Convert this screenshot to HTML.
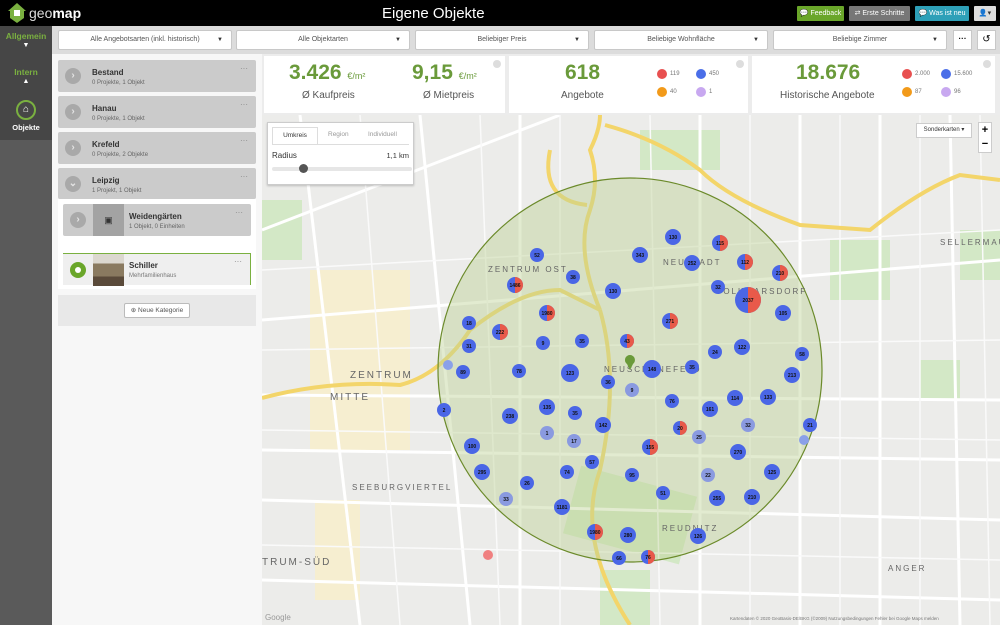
<!DOCTYPE html>
<html><head><meta charset="utf-8"><style>
*{box-sizing:border-box;margin:0;padding:0}
body{width:1000px;height:625px;overflow:hidden;font-family:"Liberation Sans",sans-serif;background:#fff;position:relative}
.abs{position:absolute}
#hdr{left:0;top:0;width:1000px;height:26px;background:#000}
.btn{position:absolute;top:6px;height:15px;font-size:7px;color:#fff;line-height:15px;text-align:center;border-radius:1px}
#side{left:0;top:26px;width:52px;height:599px;background:#5a5a5a}
#fbar{left:52px;top:26px;width:948px;height:28px;background:#dcdcdc}
.dd{position:absolute;top:30px;height:20px;background:#fff;border:1px solid #c8c8c8;font-size:7px;color:#555;line-height:18px;text-align:center;border-radius:2px}
.dd:after{content:"▼";position:absolute;right:8px;top:0;font-size:6px;color:#333}
#lp{left:52px;top:54px;width:210px;height:571px;background:#f7f7f7}
.it{position:absolute;background:#cbcbcb;border-radius:2px}
.it .c{position:absolute;left:7px;top:8px;width:16px;height:16px;border-radius:50%;background:#a9a9a9;color:#e4e4e4;font-size:10px;text-align:center;line-height:16px;font-weight:bold}
.it b{position:absolute;left:34px;top:8px;font-size:8px;color:#333}
.it i{position:absolute;left:34px;top:20px;font-size:6px;color:#666;font-style:normal}
.it u{position:absolute;right:8px;top:4px;font-size:8px;color:#888;text-decoration:none}
.panel{position:absolute;top:56px;height:57px;background:#fff}
.big{position:absolute;font-size:21px;font-weight:bold;color:#6a9a3a}
.big small{font-size:9px;font-weight:normal}
.lbl{position:absolute;font-size:10px;color:#555}
.dot{position:absolute;width:10px;height:10px;border-radius:50%}
.dt{position:absolute;font-size:6px;color:#777}
.q{position:absolute;width:8px;height:8px;border-radius:50%;background:#ddd;top:4px}
#map{left:262px;top:115px;width:738px;height:510px;background:#ececea;overflow:hidden}
</style></head><body>
<div id="hdr" class="abs">
 <svg class="abs" style="left:7px;top:2px" width="20" height="22" viewBox="0 0 20 22"><path d="M10 1 L19 9 L17 9 L17 16 L10 21 L3 16 L3 9 L1 9Z" fill="#7ab040"/><rect x="7" y="8" width="6" height="6" fill="#fff"/></svg>
 <div class="abs" style="left:29px;top:5px;font-size:14px;color:#ddd">geo<b style="color:#fff">map</b></div>
 <div class="abs" style="left:382px;top:5px;font-size:15px;color:#fff">Eigene Objekte</div>
 <div class="btn" style="left:797px;width:47px;background:#6aa62a">💬 Feedback</div>
 <div class="btn" style="left:849px;width:61px;background:#777">⇄ Erste Schritte</div>
 <div class="btn" style="left:915px;width:54px;background:#2ea0b8">💬 Was ist neu</div>
 <div class="btn" style="left:974px;width:22px;background:#ddd;color:#333">👤▾</div>
</div>
<div id="side" class="abs">
 <div class="abs" style="left:0;top:0;width:52px;height:114px;background:#464646"></div>
 <div class="abs" style="left:0;top:5px;width:52px;text-align:center;font-size:8.5px;font-weight:bold;color:#7ab040">Allgemein</div>
 <div class="abs" style="left:0;top:16px;width:52px;text-align:center;font-size:7px;color:#fff">▼</div>
 <div class="abs" style="left:0;top:41px;width:52px;text-align:center;font-size:8.5px;font-weight:bold;color:#7ab040">Intern</div>
 <div class="abs" style="left:0;top:52px;width:52px;text-align:center;font-size:7px;color:#fff">▲</div>
 <div class="abs" style="left:16px;top:74px;width:20px;height:20px;border-radius:50%;border:2px solid #7ab040;text-align:center;font-size:10px;line-height:16px;color:#fff">⌂</div>
 <div class="abs" style="left:0;top:97px;width:52px;text-align:center;font-size:7.5px;font-weight:bold;color:#fff">Objekte</div>
</div>
<div id="fbar" class="abs"></div>
<div class="dd" style="left:58px;width:174px">Alle Angebotsarten (inkl. historisch)</div>
<div class="dd" style="left:236px;width:174px">Alle Objektarten</div>
<div class="dd" style="left:415px;width:174px">Beliebiger Preis</div>
<div class="dd" style="left:594px;width:174px">Beliebige Wohnfläche</div>
<div class="dd" style="left:773px;width:174px">Beliebige Zimmer</div>
<div class="abs" style="left:953px;top:30px;width:19px;height:20px;background:#fff;border:1px solid #c8c8c8;font-size:8px;text-align:center;line-height:16px;font-weight:bold">···</div>
<div class="abs" style="left:977px;top:30px;width:19px;height:20px;background:#fff;border:1px solid #c8c8c8;font-size:10px;text-align:center;line-height:18px">↺</div>
<div id="lp" class="abs"></div>
<div class="it" style="left:58px;top:60px;width:198px;height:32px"><div class="c">›</div><b>Bestand</b><i>0 Projekte, 1 Objekt</i><u>···</u></div>
<div class="it" style="left:58px;top:96px;width:198px;height:32px"><div class="c">›</div><b>Hanau</b><i>0 Projekte, 1 Objekt</i><u>···</u></div>
<div class="it" style="left:58px;top:132px;width:198px;height:32px"><div class="c">›</div><b>Krefeld</b><i>0 Projekte, 2 Objekte</i><u>···</u></div>
<div class="it" style="left:58px;top:168px;width:198px;height:31px"><div class="c">⌄</div><b>Leipzig</b><i>1 Projekt, 1 Objekt</i><u>···</u></div>
<div class="abs" style="left:58px;top:199px;width:198px;height:90px;background:#fff"></div>
<div class="it" style="left:63px;top:204px;width:188px;height:32px"><div class="c">›</div><div class="abs" style="left:30px;top:0;width:31px;height:32px;background:#a3a3a3;color:#333;font-size:9px;text-align:center;line-height:32px">▣</div><b style="left:66px">Weidengärten</b><i style="left:66px">1 Objekt, 0 Einheiten</i><u>···</u></div>
<div class="abs" style="left:63px;top:253px;width:188px;height:32px;background:#efefef;border-top:1px solid #7ab040;border-right:1px solid #7ab040">
 <div class="abs" style="left:7px;top:8px;width:16px;height:16px;border-radius:50%;background:#6aa62a"><div class="abs" style="left:5px;top:5px;width:6px;height:6px;border-radius:50%;background:#fff"></div></div>
 <div class="abs" style="left:30px;top:0;width:31px;height:32px;background:linear-gradient(#dcd8d0 0 30%,#8a7a60 30% 70%,#5a4a3a 70%)"></div>
 <b class="abs" style="left:66px;top:7px;font-size:8px;color:#333">Schiller</b><i class="abs" style="left:66px;top:19px;font-size:6px;color:#777;font-style:normal">Mehrfamilienhaus</i><u class="abs" style="right:8px;top:3px;font-size:8px;color:#888;text-decoration:none">···</u>
</div>
<div class="abs" style="left:58px;top:295px;width:198px;height:31px;background:#e8e8e8"></div>
<div class="abs" style="left:124px;top:303px;width:66px;height:15px;background:#fff;border:1px solid #bbb;font-size:6.5px;color:#555;text-align:center;line-height:13px;border-radius:2px">⊕ Neue Kategorie</div>
<div class="abs" style="left:262px;top:54px;width:738px;height:61px;background:#ececec"></div>
<div class="panel" style="left:264px;width:241px"><div class="big" style="left:25px;top:5px">3.426 <small>€/m²</small></div><div class="lbl" style="left:38px;top:34px">Ø Kaufpreis</div><div class="big" style="left:148px;top:5px">9,15 <small>€/m²</small></div><div class="lbl" style="left:159px;top:34px">Ø Mietpreis</div><div class="q" style="right:4px"></div></div>
<div class="panel" style="left:509px;width:239px"><div class="big" style="left:56px;top:5px">618</div><div class="lbl" style="left:52px;top:34px">Angebote</div>
 <div class="dot" style="left:148px;top:13px;background:#e85050"></div><div class="dt" style="left:161px;top:15px">119</div>
 <div class="dot" style="left:187px;top:13px;background:#4a6ee8"></div><div class="dt" style="left:200px;top:15px">450</div>
 <div class="dot" style="left:148px;top:31px;background:#f29a1a"></div><div class="dt" style="left:161px;top:33px">40</div>
 <div class="dot" style="left:187px;top:31px;background:#c8a8f0"></div><div class="dt" style="left:200px;top:33px">1</div><div class="q" style="right:4px"></div></div>
<div class="panel" style="left:752px;width:243px"><div class="big" style="left:44px;top:5px">18.676</div><div class="lbl" style="left:28px;top:34px">Historische Angebote</div>
 <div class="dot" style="left:150px;top:13px;background:#e85050"></div><div class="dt" style="left:163px;top:15px">2.000</div>
 <div class="dot" style="left:189px;top:13px;background:#4a6ee8"></div><div class="dt" style="left:202px;top:15px">15.600</div>
 <div class="dot" style="left:150px;top:31px;background:#f29a1a"></div><div class="dt" style="left:163px;top:33px">87</div>
 <div class="dot" style="left:189px;top:31px;background:#c8a8f0"></div><div class="dt" style="left:202px;top:33px">96</div><div class="q" style="right:4px"></div></div>
<div id="map" class="abs">
<svg width="738" height="510" viewBox="262 115 738 510" style="position:absolute;left:0;top:0">
 <rect x="262" y="115" width="738" height="510" fill="#ececea"/>
 <g fill="#d3e8c6"><rect x="640" y="130" width="80" height="40"/><rect x="830" y="240" width="60" height="60"/><rect x="262" y="200" width="40" height="60"/><rect x="570" y="480" width="120" height="70" transform="rotate(15 630 515)"/><rect x="600" y="570" width="50" height="55"/><rect x="920" y="360" width="40" height="40"/><rect x="960" y="230" width="40" height="50"/><rect x="350" y="300" width="20" height="60"/></g>
 <g fill="#f6eed0"><rect x="310" y="270" width="100" height="180"/><rect x="315" y="500" width="45" height="100"/></g>
 <g stroke="#fff" stroke-width="3" fill="none">
  <path d="M262 395 L1000 400"/><path d="M262 500 L1000 520"/><path d="M300 115 L360 625"/><path d="M420 115 L470 625"/><path d="M262 320 L1000 260"/><path d="M700 115 L700 625"/><path d="M880 115 L880 625"/><path d="M262 580 L1000 600"/><path d="M262 230 L560 115"/><path d="M800 115 L800 625"/><path d="M950 115 L960 625"/><path d="M520 115 L520 625"/><path d="M262 450 L1000 460"/>
 </g>
 <g stroke="#fafafa" stroke-width="1.5" fill="none">
  <path d="M262 270 L1000 230"/><path d="M262 350 L1000 340"/><path d="M262 430 L1000 440"/><path d="M262 545 L1000 560"/><path d="M360 115 L400 625"/><path d="M480 115 L500 625"/><path d="M560 115 L560 625"/><path d="M650 115 L660 625"/><path d="M750 115 L750 625"/><path d="M840 115 L840 625"/><path d="M920 115 L920 625"/><path d="M980 115 L990 625"/>
 </g>
 <g stroke="#f3d56a" stroke-width="4" fill="none">
  <path d="M262 398 Q330 380 400 385 Q440 375 470 330 Q520 290 560 290 L600 310"/>
  <path d="M600 310 Q575 250 590 210 Q600 180 590 150 Q600 130 600 115"/>
  <path d="M587 205 Q540 200 550 150"/>
  <path d="M600 310 Q620 380 600 470 Q575 540 630 625"/>
  <path d="M605 125 Q660 140 700 170 Q730 200 800 225 L870 230 Q920 190 960 175 L1000 180"/>
 </g>
 <circle cx="630" cy="370" r="192" fill="rgba(190,210,150,0.45)" stroke="#6b8a2a" stroke-width="1.2"/>
 <g font-family="Liberation Sans" font-size="8" fill="#666" letter-spacing="2">
  <text x="488" y="272">ZENTRUM OST</text><text x="663" y="265">NEUSTADT</text><text x="716" y="294">VOLKMARSDORF</text><text x="604" y="372">NEUSCHÖNEFELD</text><text x="662" y="531">REUDNITZ</text><text x="352" y="490">SEEBURGVIERTEL</text><text x="350" y="378" font-size="10">ZENTRUM</text><text x="330" y="400" font-size="10">MITTE</text><text x="262" y="565" font-size="10">TRUM-SÜD</text><text x="888" y="571">ANGER</text><text x="940" y="245">SELLERMAUSE</text>
 </g>
 <path d="M630 355 a5 5 0 1 1 -0.1 0Z M630 370 L625 360 L635 360Z" fill="#6a9a3a"/>
 <circle cx="448" cy="365" r="5" fill="#8aa0e8"/><circle cx="804" cy="440" r="5" fill="#8aa0e8"/>
 <circle cx="488" cy="555" r="5" fill="#f08080"/>
 <text x="265" y="620" font-family="Liberation Sans" font-size="8" fill="#999">Google</text>
 <text x="730" y="620" font-family="Liberation Sans" font-size="4.5" fill="#777">Kartendaten © 2020 GeoBasis-DE/BKG (©2009)   Nutzungsbedingungen   Fehler bei Google Maps melden</text>
</svg>
<div class="abs" style="left:5px;top:7px;width:147px;height:63px;background:#fff;border:1px solid #ccc;box-shadow:0 1px 2px rgba(0,0,0,.2)">
 <div class="abs" style="left:4px;top:4px;width:46px;height:17px;border:1px solid #ddd;border-bottom:none;font-size:6.5px;text-align:center;line-height:16px;color:#333">Umkreis</div>
 <div class="abs" style="left:60px;top:8px;font-size:6.5px;color:#999">Region</div>
 <div class="abs" style="left:100px;top:8px;font-size:6.5px;color:#999">Individuell</div>
 <div class="abs" style="left:4px;top:21px;width:137px;height:1px;background:#ddd"></div>
 <div class="abs" style="left:4px;top:28px;font-size:8px;color:#333">Radius</div>
 <div class="abs" style="right:4px;top:28px;font-size:7.5px;color:#333">1,1 km</div>
 <div class="abs" style="left:4px;top:44px;width:140px;height:4px;background:#e6e6e6;border-radius:2px"></div>
 <div class="abs" style="left:31px;top:41px;width:9px;height:9px;background:#555;border-radius:50%"></div>
</div>
<div class="abs" style="left:654px;top:8px;width:56px;height:15px;background:#fff;border:1px solid #ccc;font-size:6px;text-align:center;line-height:13px;color:#333">Sonderkarten ▾</div>
<div class="abs" style="left:716px;top:7px;width:14px;height:31px;background:#fff;border:1px solid #ccc;font-size:11px;text-align:center;line-height:14px;font-weight:bold">+<br>−</div>
</div>
<svg class="abs" style="left:262px;top:115px" width="738" height="510" viewBox="262 115 738 510" font-family="Liberation Sans" font-size="5" font-weight="bold" text-anchor="middle">
<g fill="#4a66e6">
<circle cx="673" cy="237" r="8"/><circle cx="720" cy="243" r="8"/><circle cx="640" cy="255" r="8"/><circle cx="692" cy="263" r="8"/><circle cx="745" cy="262" r="8"/><circle cx="537" cy="255" r="7"/><circle cx="780" cy="273" r="8"/><circle cx="573" cy="277" r="7"/><circle cx="515" cy="285" r="8"/><circle cx="613" cy="291" r="8"/><circle cx="718" cy="287" r="7"/><circle cx="748" cy="300" r="13"/><circle cx="547" cy="313" r="8"/><circle cx="783" cy="313" r="8"/><circle cx="670" cy="321" r="8"/><circle cx="469" cy="323" r="7"/><circle cx="500" cy="332" r="8"/><circle cx="543" cy="343" r="7"/><circle cx="582" cy="341" r="7"/><circle cx="627" cy="341" r="7"/><circle cx="715" cy="352" r="7"/><circle cx="742" cy="347" r="8"/><circle cx="802" cy="354" r="7"/><circle cx="469" cy="346" r="7"/><circle cx="463" cy="372" r="7"/><circle cx="519" cy="371" r="7"/><circle cx="570" cy="373" r="9"/><circle cx="652" cy="369" r="9"/><circle cx="692" cy="367" r="7"/><circle cx="792" cy="375" r="8"/><circle cx="608" cy="382" r="7"/><circle cx="735" cy="398" r="8"/><circle cx="768" cy="397" r="8"/><circle cx="444" cy="410" r="7"/><circle cx="510" cy="416" r="8"/><circle cx="547" cy="407" r="8"/><circle cx="575" cy="413" r="7"/><circle cx="672" cy="401" r="7"/><circle cx="710" cy="409" r="8"/><circle cx="603" cy="425" r="8"/><circle cx="680" cy="428" r="7"/><circle cx="810" cy="425" r="7"/><circle cx="472" cy="446" r="8"/><circle cx="650" cy="447" r="8"/><circle cx="738" cy="452" r="8"/><circle cx="592" cy="462" r="7"/><circle cx="482" cy="472" r="8"/><circle cx="567" cy="472" r="7"/><circle cx="632" cy="475" r="7"/><circle cx="772" cy="472" r="8"/><circle cx="527" cy="483" r="7"/><circle cx="663" cy="493" r="7"/><circle cx="717" cy="498" r="8"/><circle cx="752" cy="497" r="8"/><circle cx="562" cy="507" r="8"/><circle cx="595" cy="532" r="8"/><circle cx="628" cy="535" r="8"/><circle cx="698" cy="536" r="8"/><circle cx="619" cy="558" r="7"/><circle cx="648" cy="557" r="7"/>
</g>
<g fill="#e85a4a">
<path d="M720 235 a8 8 0 0 1 0 16Z"/><path d="M745 254 a8 8 0 0 1 0 16Z"/><path d="M515 277 a8 8 0 0 1 0 16Z"/><path d="M748 287 a13 13 0 0 1 0 26Z"/><path d="M500 324 a8 8 0 0 1 0 16Z"/><path d="M670 313 a8 8 0 0 1 0 16Z"/><path d="M627 334 a7 7 0 0 1 0 14Z"/><path d="M680 421 a7 7 0 0 1 0 14Z"/><path d="M650 439 a8 8 0 0 1 0 16Z"/><path d="M595 524 a8 8 0 0 1 0 16Z"/><path d="M648 550 a7 7 0 0 1 0 14Z"/><path d="M547 305 a8 8 0 0 1 0 16Z"/><path d="M780 265 a8 8 0 0 1 0 16Z"/>
</g>
<g fill="#8a9ae0">
<circle cx="632" cy="390" r="7"/><circle cx="748" cy="425" r="7"/><circle cx="547" cy="433" r="7"/><circle cx="574" cy="441" r="7"/><circle cx="699" cy="437" r="7"/><circle cx="708" cy="475" r="7"/><circle cx="506" cy="499" r="7"/>
</g>
<g fill="#111">
<text x="673" y="239">130</text><text x="720" y="245">115</text><text x="640" y="257">343</text><text x="692" y="265">252</text><text x="745" y="264">112</text><text x="537" y="257">52</text><text x="780" y="275">210</text><text x="573" y="279">38</text><text x="515" y="287">1486</text><text x="613" y="293">130</text><text x="718" y="289">32</text><text x="748" y="302">2037</text><text x="547" y="315">1980</text><text x="783" y="315">105</text><text x="670" y="323">271</text><text x="469" y="325">18</text><text x="500" y="334">222</text><text x="543" y="345">9</text><text x="582" y="343">35</text><text x="627" y="343">43</text><text x="715" y="354">24</text><text x="742" y="349">122</text><text x="802" y="356">58</text><text x="469" y="348">31</text><text x="463" y="374">89</text><text x="519" y="373">78</text><text x="570" y="375">123</text><text x="652" y="371">148</text><text x="692" y="369">35</text><text x="792" y="377">213</text><text x="608" y="384">36</text><text x="632" y="392">9</text><text x="735" y="400">114</text><text x="768" y="399">133</text><text x="444" y="412">2</text><text x="510" y="418">238</text><text x="547" y="409">135</text><text x="575" y="415">35</text><text x="672" y="403">76</text><text x="710" y="411">161</text><text x="603" y="427">142</text><text x="680" y="430">20</text><text x="748" y="427">32</text><text x="810" y="427">21</text><text x="547" y="435">1</text><text x="574" y="443">17</text><text x="699" y="439">25</text><text x="472" y="448">100</text><text x="650" y="449">155</text><text x="738" y="454">270</text><text x="592" y="464">57</text><text x="482" y="474">295</text><text x="567" y="474">74</text><text x="632" y="477">95</text><text x="772" y="474">125</text><text x="708" y="477">22</text><text x="527" y="485">26</text><text x="663" y="495">51</text><text x="717" y="500">255</text><text x="752" y="499">210</text><text x="506" y="501">33</text><text x="562" y="509">1181</text><text x="595" y="534">1980</text><text x="628" y="537">280</text><text x="698" y="538">126</text><text x="619" y="560">66</text><text x="648" y="559">76</text>
</g>
</svg>
</body></html>
